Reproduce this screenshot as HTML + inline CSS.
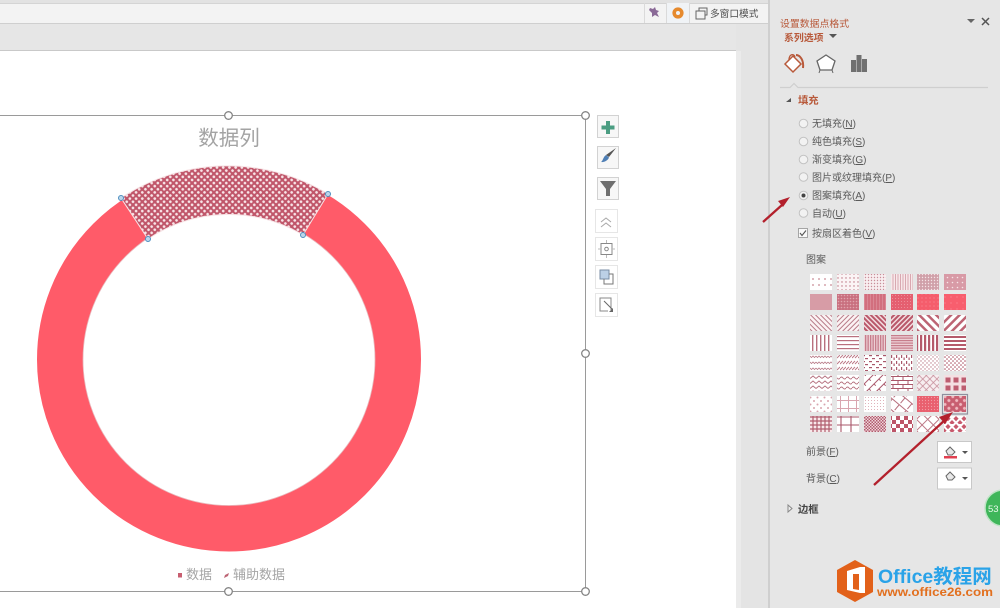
<!DOCTYPE html>
<html><head><meta charset="utf-8">
<style>
html,body{margin:0;padding:0;width:1000px;height:608px;overflow:hidden;background:#e6e6e6}
svg{display:block;filter:blur(.35px)}
text{font-family:"Liberation Sans","Noto Sans CJK SC",sans-serif}
.o{font-size:10px;fill:#5a5a5a}
</style></head><body>
<svg width="1000" height="608" viewBox="0 0 1000 608" xmlns="http://www.w3.org/2000/svg">
<defs>
<pattern id="sel" width="4.4" height="4.4" patternUnits="userSpaceOnUse" patternTransform="rotate(45 229 190)"><rect width="4.4" height="4.4" fill="#c0566a"/><circle cx="2.2" cy="2.2" r="1.35" fill="#f8e4e7"/></pattern>
<pattern id="p1" width="6" height="6" patternUnits="userSpaceOnUse"><rect width="6" height="6" fill="#fff"/><circle cx="3" cy="3" r=".9" fill="#c98893"/></pattern>
<pattern id="p2" width="4" height="4" patternUnits="userSpaceOnUse"><rect width="4" height="4" fill="#fbf4f5"/><circle cx="2" cy="2" r=".7" fill="#b86f7c"/></pattern>
<pattern id="p3" width="3" height="3" patternUnits="userSpaceOnUse"><rect width="3" height="3" fill="#f8eef0"/><circle cx="1.5" cy="1.5" r=".7" fill="#c88d98"/></pattern>
<pattern id="p4" width="2.5" height="3" patternUnits="userSpaceOnUse"><rect width="2.5" height="3" fill="#f7e8ea"/><rect width="1" height="3" fill="#d8a8b0"/></pattern>
<pattern id="p5" width="3" height="3" patternUnits="userSpaceOnUse"><rect width="3" height="3" fill="#d0a0a9"/><circle cx="1.5" cy="1.5" r=".7" fill="#f5e3e6"/></pattern>
<pattern id="p6" width="5" height="5" patternUnits="userSpaceOnUse"><rect width="5" height="5" fill="#d89aa6"/><circle cx="2.5" cy="2.5" r=".8" fill="#f7e3e6"/></pattern>
<pattern id="d1" width="4" height="4" patternUnits="userSpaceOnUse"><rect width="4" height="4" fill="#d79ca6"/></pattern>
<pattern id="d2" width="3" height="3" patternUnits="userSpaceOnUse"><rect width="3" height="3" fill="#c9707f"/><circle cx="1.5" cy="1.5" r=".8" fill="#e0a5ae"/></pattern>
<pattern id="d3" width="3" height="3" patternUnits="userSpaceOnUse"><rect width="3" height="3" fill="#d26f7e"/><rect width=".8" height="3" fill="#dc8d99"/></pattern>
<pattern id="d4" width="3" height="3" patternUnits="userSpaceOnUse"><rect width="3" height="3" fill="#e55f70"/><circle cx="1.5" cy="1.5" r=".5" fill="#ef9ba6"/></pattern>
<pattern id="d5" width="4" height="4" patternUnits="userSpaceOnUse"><rect width="4" height="4" fill="#f55d6c"/><circle cx="2" cy="2" r=".5" fill="#f9a2ab"/></pattern>
<pattern id="d6" width="6" height="6" patternUnits="userSpaceOnUse"><rect width="6" height="6" fill="#f85e6e"/><circle cx="3" cy="3" r=".5" fill="#fca5ae"/></pattern>
<pattern id="a1" width="3.5" height="3.5" patternUnits="userSpaceOnUse" patternTransform="rotate(-45)"><rect width="3.5" height="3.5" fill="#fbf2f3"/><rect width="1" height="3.5" fill="#b87c88"/></pattern>
<pattern id="a2" width="3.5" height="3.5" patternUnits="userSpaceOnUse" patternTransform="rotate(45)"><rect width="3.5" height="3.5" fill="#fbf2f3"/><rect width="1" height="3.5" fill="#b87c88"/></pattern>
<pattern id="a3" width="3.5" height="3.5" patternUnits="userSpaceOnUse" patternTransform="rotate(-45)"><rect width="3.5" height="3.5" fill="#f3dde0"/><rect width="2" height="3.5" fill="#b9586a"/></pattern>
<pattern id="a4" width="3.5" height="3.5" patternUnits="userSpaceOnUse" patternTransform="rotate(45)"><rect width="3.5" height="3.5" fill="#f3dde0"/><rect width="2" height="3.5" fill="#b9586a"/></pattern>
<pattern id="a5" width="6" height="6" patternUnits="userSpaceOnUse" patternTransform="rotate(-45)"><rect width="6" height="6" fill="#fff"/><rect width="2.5" height="6" fill="#bd6474"/></pattern>
<pattern id="a6" width="6" height="6" patternUnits="userSpaceOnUse" patternTransform="rotate(45)"><rect width="6" height="6" fill="#fff"/><rect width="2.5" height="6" fill="#bd6474"/></pattern>
<pattern id="v1" width="4" height="4" patternUnits="userSpaceOnUse"><rect width="4" height="4" fill="#fff"/><rect width="1.4" height="4" fill="#b9707e"/></pattern>
<pattern id="h1" width="4" height="4" patternUnits="userSpaceOnUse"><rect width="4" height="4" fill="#fff"/><rect width="4" height="1.2" fill="#b9707e"/></pattern>
<pattern id="v2" width="2.5" height="4" patternUnits="userSpaceOnUse"><rect width="2.5" height="4" fill="#eccfd4"/><rect width="1.3" height="4" fill="#c77d8b"/></pattern>
<pattern id="h2" width="4" height="2.5" patternUnits="userSpaceOnUse"><rect width="4" height="2.5" fill="#eccfd4"/><rect width="4" height="1.2" fill="#c77d8b"/></pattern>
<pattern id="v3" width="4" height="4" patternUnits="userSpaceOnUse"><rect width="4" height="4" fill="#fff"/><rect width="2.2" height="4" fill="#b55a6b"/></pattern>
<pattern id="h3" width="4" height="4" patternUnits="userSpaceOnUse"><rect width="4" height="4" fill="#fff"/><rect width="4" height="2" fill="#b55a6b"/></pattern>
<pattern id="w1" width="6" height="6" patternUnits="userSpaceOnUse"><rect width="6" height="6" fill="#fff"/><path d="M0 2l1.5 1.500L3 2l1.500 1.500L6 2" fill="none" stroke="#b97a87" stroke-width=".8"/></pattern>
<pattern id="w2" width="6" height="6" patternUnits="userSpaceOnUse"><rect width="6" height="6" fill="#fff"/><path d="M0 4L3 1M3 4L6 1" stroke="#bd7a87" stroke-width="1"/></pattern>
<pattern id="w3" width="7" height="6" patternUnits="userSpaceOnUse"><rect width="7" height="6" fill="#fff"/><rect x="1" y="1" width="3" height="1.200" fill="#a9576a"/><rect x="4" y="4" width="3" height="1.200" fill="#a9576a"/></pattern>
<pattern id="w4" width="5" height="6" patternUnits="userSpaceOnUse"><rect width="5" height="6" fill="#fff"/><rect x="1" y="1" width="1.200" height="3" fill="#a9576a"/><rect x="3.500" y="3.500" width="1.200" height="2.500" fill="#a9576a"/></pattern>
<pattern id="w5" width="4" height="4" patternUnits="userSpaceOnUse"><rect width="4" height="4" fill="#fff"/><circle cx="1" cy="1" r=".7" fill="#bb7d89"/><circle cx="3" cy="3" r=".7" fill="#bb7d89"/></pattern>
<pattern id="w6" width="4" height="4" patternUnits="userSpaceOnUse"><rect width="4" height="4" fill="#fff"/><circle cx="1" cy="1" r=".8" fill="#ac5062"/><circle cx="3" cy="3" r=".8" fill="#ac5062"/></pattern>
<pattern id="z1" width="6" height="5" patternUnits="userSpaceOnUse"><rect width="6" height="5" fill="#fff"/><path d="M0 3.500L3 1l3 2.500" fill="none" stroke="#b5707e" stroke-width=".9"/></pattern>
<pattern id="z2" width="6" height="5" patternUnits="userSpaceOnUse"><rect width="6" height="5" fill="#fff"/><path d="M0 3Q1.500 1 3 3T6 3" fill="none" stroke="#b5707e" stroke-width=".9"/></pattern>
<pattern id="z3" width="7" height="7" patternUnits="userSpaceOnUse" patternTransform="rotate(-45)"><rect width="7" height="7" fill="#fff"/><rect width="7" height="1" fill="#a9576a"/><rect x="3" width="1" height="3" fill="#a9576a"/></pattern>
<pattern id="z4" width="10" height="8" patternUnits="userSpaceOnUse"><rect width="10" height="8" fill="#fff"/><path d="M0 .5H10M0 4.500H10M3 .5V4.500M8 4.500V8" stroke="#a9576a" fill="none"/></pattern>
<pattern id="z5" width="5" height="5" patternUnits="userSpaceOnUse" patternTransform="rotate(45)"><rect width="5" height="5" fill="#f7eef0"/><path d="M0 .5H5M.5 0V5" stroke="#c78f9b" stroke-width=".8"/></pattern>
<pattern id="z6" width="8" height="8" patternUnits="userSpaceOnUse"><rect width="8" height="8" fill="#f4dfe2"/><rect x="1.500" y="1.500" width="5" height="5" fill="#bd5d70"/></pattern>
<pattern id="s1" width="7" height="7" patternUnits="userSpaceOnUse"><rect width="7" height="7" fill="#fff"/><circle cx="2" cy="2" r="1" fill="#d9a5af"/><circle cx="5.500" cy="5.500" r="1" fill="#d9a5af"/></pattern>
<pattern id="s2" width="8" height="8" patternUnits="userSpaceOnUse"><rect width="8" height="8" fill="#fff"/><path d="M.5 0V8M0 .5H8" stroke="#d9a5af"/></pattern>
<pattern id="s3" width="3" height="3" patternUnits="userSpaceOnUse"><rect width="3" height="3" fill="#fff"/><circle cx="1.500" cy="1.500" r=".5" fill="#d69aa5"/></pattern>
<pattern id="s4" width="9" height="9" patternUnits="userSpaceOnUse" patternTransform="rotate(40)"><rect width="9" height="9" fill="#fff"/><path d="M0 2H9M4 2V9" stroke="#b66d7c"/></pattern>
<pattern id="s5" width="3" height="3" patternUnits="userSpaceOnUse"><rect width="3" height="3" fill="#e9606f"/><circle cx="1.500" cy="1.500" r=".6" fill="#f29da6"/></pattern>
<pattern id="s6" width="5.500" height="5.500" patternUnits="userSpaceOnUse" patternTransform="rotate(45)"><rect width="5.500" height="5.500" fill="#c85e70"/><circle cx="2.700" cy="2.700" r="1.500" fill="#f0b9c0"/></pattern>
<pattern id="g1" width="4" height="4" patternUnits="userSpaceOnUse"><rect width="4" height="4" fill="#f8e8ea"/><path d="M1 0V4M0 1H4" stroke="#b05c6d" stroke-width="1.200"/></pattern>
<pattern id="g2" width="10" height="8" patternUnits="userSpaceOnUse"><rect width="10" height="8" fill="#fff"/><path d="M1 0V8M0 1H10" stroke="#a9576a" stroke-width="1.100"/></pattern>
<pattern id="g3" width="3" height="3" patternUnits="userSpaceOnUse"><rect width="3" height="3" fill="#f1d5da"/><rect width="1.500" height="1.500" fill="#b05c6d"/><rect x="1.500" y="1.500" width="1.500" height="1.500" fill="#b05c6d"/></pattern>
<pattern id="g4" width="8" height="8" patternUnits="userSpaceOnUse"><rect width="8" height="8" fill="#fff"/><rect width="4" height="4" fill="#bd5568"/><rect x="4" y="4" width="4" height="4" fill="#bd5568"/></pattern>
<pattern id="g5" width="8" height="8" patternUnits="userSpaceOnUse" patternTransform="rotate(45)"><rect width="8" height="8" fill="#fff"/><path d="M.5 0V8M0 .5H8" stroke="#bd7785"/></pattern>
<pattern id="g6" width="8" height="8" patternUnits="userSpaceOnUse"><rect width="8" height="8" fill="#fff"/><path d="M4 0l2.600 2.600L4 5.200 1.400 2.600z" fill="#c8596c"/><path d="M0 4l2.600 2.600L0 9.200zM8 4L5.400 6.600 8 9.200z" fill="#c8596c"/></pattern>
</defs>

<!-- chrome -->
<rect width="1000" height="608" fill="#e6e6e6"/>
<rect x="0" y="0" width="770" height="3" fill="#e2e2e2"/>
<rect x="0" y="3" width="768" height="20" fill="#f3f3f3"/>
<rect x="0" y="3" width="768" height="1" fill="#d4d4d4"/>
<rect x="0" y="23" width="768" height="1" fill="#cfcfcf"/>
<rect x="0" y="50" width="736" height="1.500" fill="#c9c9c9"/>
<rect x="0" y="51" width="736" height="557" fill="#fff"/>
<rect x="736" y="24" width="33" height="584" fill="#e4e4e4"/>
<rect x="736" y="51" width="5" height="557" fill="#ebebeb"/>
<rect x="768" y="0" width="2" height="608" fill="#cfcfcf"/>
<rect x="644" y="3" width="1" height="20" fill="#dadada"/>
<rect x="667" y="3" width="22" height="20" fill="#f0f3f6"/>
<rect x="666" y="3" width="1" height="20" fill="#dadada"/>
<rect x="689" y="3" width="1" height="20" fill="#dadada"/>
<path d="M650 8l3 1 2-2 1 3 3 1-2 2 2 4-4-2-3 2 0-4-3-3z" fill="#8a6a97"/>
<circle cx="678" cy="13" r="3.800" fill="none" stroke="#e68a2e" stroke-width="3.600"/>
<rect x="696" y="11" width="9" height="8" fill="none" stroke="#666"/>
<path d="M699 11V8h8v7h-2" fill="none" stroke="#666"/>
<text x="710" y="17" font-size="9.700" fill="#4c4c4c">多窗口模式</text>

<!-- chart frame -->
<path d="M-1 115.500H585.500V591.500H-1" fill="none" stroke="#9a9a9a"/>
<text x="229" y="145" font-size="20.500" fill="#a3a3a3" text-anchor="middle">数据列</text>

<!-- ring -->
<circle cx="229" cy="359.500" r="169" fill="none" stroke="#ff5b69" stroke-width="46"/>
<circle cx="229" cy="359.500" r="146" fill="none" stroke="#e8b8bc" stroke-width=".8"/>
<path d="M121 198A193 193 0 0 1 328 194L303 235A145 145 0 0 0 148 239Z" fill="url(#sel)" stroke="#f7e4e6" stroke-width="1"/>
<g fill="#bcd6ea" stroke="#4e8fc0" stroke-width="1"><circle cx="121" cy="198" r="2.500"/><circle cx="328" cy="194" r="2.500"/><circle cx="148" cy="239" r="2.500"/><circle cx="303" cy="235" r="2.500"/></g>

<rect x="178" y="573" width="4" height="4.500" fill="#c85e70"/>
<text x="186" y="579" font-size="13" fill="#a5a5a5">数据</text>
<path d="M224 578l1-3 4-2-1 3z" fill="#bd6474"/>
<text x="233" y="579" font-size="13" fill="#a5a5a5">辅助数据</text>

<g fill="#fff" stroke="#858585" stroke-width="1.300">
<circle cx="228.500" cy="115.500" r="3.800"/><circle cx="585.500" cy="115.500" r="3.800"/><circle cx="585.500" cy="353.500" r="3.800"/><circle cx="228.500" cy="591.500" r="3.800"/><circle cx="585.500" cy="591.500" r="3.800"/>
</g>

<!-- side buttons -->
<g fill="#f7f7f7" stroke="#d2d2d2">
<rect x="597.500" y="115.500" width="21" height="22"/><rect x="597.500" y="146.500" width="21" height="22"/><rect x="597.500" y="177.500" width="21" height="22"/>
</g>
<g fill="#fff" stroke="#e6e6e6">
<rect x="595.500" y="209.500" width="22" height="23"/><rect x="595.500" y="237.500" width="22" height="23"/><rect x="595.500" y="265.500" width="22" height="23"/><rect x="595.500" y="293.500" width="22" height="23"/>
</g>
<path d="M606 121h4v4.500h4.500v4H610v4.500h-4v-4.500h-4.500v-4H606z" fill="#4b9d82"/>
<path d="M616 148l-7 9-3-2z" fill="#555"/><path d="M606 155l3 2.500c-1 3-5 5-8 4.500 2-1 2-5 5-7z" fill="#4f7fb5"/>
<path d="M600 181h16l-6 8v7h-4v-7z" fill="#6f6f6f"/>
<path d="M601 222l5-4 5 4M601 227l5-4 5 4" fill="none" stroke="#a8a8a8"/>
<rect x="601" y="243.500" width="11" height="11" fill="none" stroke="#888"/><circle cx="606.500" cy="249" r="1.800" fill="none" stroke="#888"/><path d="M606.500 240v3M606.500 255v3M598 249h3M612 249h3" stroke="#bbb"/>
<rect x="600" y="270" width="9" height="9" fill="#bcd0e6" stroke="#7a8ea5"/><path d="M609 274h4v10h-9v-5" fill="none" stroke="#777"/>
<path d="M611 310v-12h-11v13h8" fill="none" stroke="#888"/><path d="M604 301l8 8" stroke="#666"/><path d="M609 312l4-4v4z" fill="#666"/>

<!-- panel -->
<text x="780" y="27" font-size="9.900" fill="#b8593a">设置数据点格式</text>
<text x="784" y="41" font-size="9.900" font-weight="bold" fill="#b8593a">系列选项</text>
<path d="M829 34h8l-4 4z" fill="#555"/>
<path d="M967 19h8l-4 4z" fill="#666"/>
<path d="M982 18l7 7M989 18l-7 7" stroke="#555" stroke-width="1.500"/>
<!-- tabs -->
<path d="M785 64l8-8 8 8-8 8z" fill="#fff" stroke="#b8593a" stroke-width="1.500"/>
<path d="M789 60c0-6 5-7 6-3" fill="none" stroke="#b8593a" stroke-width="1.300"/>
<path d="M796 55c4 0 8 5 7 13" fill="none" stroke="#b8593a" stroke-width="2"/>
<path d="M826 55l9 6-3 9h-12l-3-9z" fill="#fff" stroke="#666" stroke-width="1.300"/>
<path d="M820 70l-1 3M832 70l1 3" stroke="#666"/>
<path d="M851 60h5v12h-5zM856.500 55h5v17h-5zM862 59h5v13h-5z" fill="#707070"/>
<path d="M780 87.500H790l4-4 4 4H988" fill="none" stroke="#cfcfcf" stroke-width="1.200"/>
<path d="M786 102l5-4v4z" fill="#555"/>
<text x="798" y="104" font-size="10.300" font-weight="bold" fill="#b8593a">填充</text>

<g fill="#f2f2f2" stroke="#c2c2c2">
<circle cx="803.500" cy="123.500" r="4.300"/><circle cx="803.500" cy="141.500" r="4.300"/><circle cx="803.500" cy="159.500" r="4.300"/><circle cx="803.500" cy="177" r="4.300"/><circle cx="803.500" cy="195.500" r="4.300"/><circle cx="803.500" cy="213" r="4.300"/>
</g>
<circle cx="803.500" cy="195.500" r="2" fill="#444"/>
<text class="o" x="812" y="127">无填充(<tspan text-decoration="underline">N</tspan>)</text>
<text class="o" x="812" y="145">纯色填充(<tspan text-decoration="underline">S</tspan>)</text>
<text class="o" x="812" y="163">渐变填充(<tspan text-decoration="underline">G</tspan>)</text>
<text class="o" x="812" y="181">图片或纹理填充(<tspan text-decoration="underline">P</tspan>)</text>
<text class="o" x="812" y="199">图案填充(<tspan text-decoration="underline">A</tspan>)</text>
<text class="o" x="812" y="217">自动(<tspan text-decoration="underline">U</tspan>)</text>
<rect x="798.500" y="228.500" width="9" height="9" fill="#f8f8f8" stroke="#a5a5a5"/>
<path d="M800 233l2 2.500 4-5" fill="none" stroke="#555" stroke-width="1.100"/>
<text class="o" x="812" y="237">按扇区着色(<tspan text-decoration="underline">V</tspan>)</text>
<text class="o" x="806" y="263">图案</text>

<!-- pattern grid -->
<g>
<rect x="810" y="274" width="22" height="16" fill="url(#p1)"/><rect x="837" y="274" width="22" height="16" fill="url(#p2)"/><rect x="864" y="274" width="22" height="16" fill="url(#p3)"/><rect x="891" y="274" width="22" height="16" fill="url(#p4)"/><rect x="917" y="274" width="22" height="16" fill="url(#p5)"/><rect x="944" y="274" width="22" height="16" fill="url(#p6)"/>
<rect x="810" y="294" width="22" height="16" fill="url(#d1)"/><rect x="837" y="294" width="22" height="16" fill="url(#d2)"/><rect x="864" y="294" width="22" height="16" fill="url(#d3)"/><rect x="891" y="294" width="22" height="16" fill="url(#d4)"/><rect x="917" y="294" width="22" height="16" fill="url(#d5)"/><rect x="944" y="294" width="22" height="16" fill="url(#d6)"/>
<rect x="810" y="315" width="22" height="16" fill="url(#a1)"/><rect x="837" y="315" width="22" height="16" fill="url(#a2)"/><rect x="864" y="315" width="22" height="16" fill="url(#a3)"/><rect x="891" y="315" width="22" height="16" fill="url(#a4)"/><rect x="917" y="315" width="22" height="16" fill="url(#a5)"/><rect x="944" y="315" width="22" height="16" fill="url(#a6)"/>
<rect x="810" y="335" width="22" height="16" fill="url(#v1)"/><rect x="837" y="335" width="22" height="16" fill="url(#h1)"/><rect x="864" y="335" width="22" height="16" fill="url(#v2)"/><rect x="891" y="335" width="22" height="16" fill="url(#h2)"/><rect x="917" y="335" width="22" height="16" fill="url(#v3)"/><rect x="944" y="335" width="22" height="16" fill="url(#h3)"/>
<rect x="810" y="355" width="22" height="16" fill="url(#w1)"/><rect x="837" y="355" width="22" height="16" fill="url(#w2)"/><rect x="864" y="355" width="22" height="16" fill="url(#w3)"/><rect x="891" y="355" width="22" height="16" fill="url(#w4)"/><rect x="917" y="355" width="22" height="16" fill="url(#w5)"/><rect x="944" y="355" width="22" height="16" fill="url(#w6)"/>
<rect x="810" y="375" width="22" height="16" fill="url(#z1)"/><rect x="837" y="375" width="22" height="16" fill="url(#z2)"/><rect x="864" y="375" width="22" height="16" fill="url(#z3)"/><rect x="891" y="375" width="22" height="16" fill="url(#z4)"/><rect x="917" y="375" width="22" height="16" fill="url(#z5)"/><rect x="944" y="375" width="22" height="16" fill="url(#z6)"/>
<rect x="810" y="396" width="22" height="16" fill="url(#s1)"/><rect x="837" y="396" width="22" height="16" fill="url(#s2)"/><rect x="864" y="396" width="22" height="16" fill="url(#s3)"/><rect x="891" y="396" width="22" height="16" fill="url(#s4)"/><rect x="917" y="396" width="22" height="16" fill="url(#s5)"/><rect x="944" y="396" width="22" height="16" fill="url(#s6)"/>
<rect x="810" y="416" width="22" height="16" fill="url(#g1)"/><rect x="837" y="416" width="22" height="16" fill="url(#g2)"/><rect x="864" y="416" width="22" height="16" fill="url(#g3)"/><rect x="891" y="416" width="22" height="16" fill="url(#g4)"/><rect x="917" y="416" width="22" height="16" fill="url(#g5)"/><rect x="944" y="416" width="22" height="16" fill="url(#g6)"/>
<rect x="942.500" y="394.500" width="25" height="19.500" fill="none" stroke="#8f8f9d" stroke-width="1.200"/>
</g>

<text class="o" x="806" y="455">前景(<tspan text-decoration="underline">F</tspan>)</text>
<text class="o" x="806" y="482">背景(<tspan text-decoration="underline">C</tspan>)</text>
<rect x="937.500" y="441.500" width="34" height="21" fill="#fff" stroke="#c8c8c8"/>
<rect x="937.500" y="468" width="34" height="21" fill="#fff" stroke="#c8c8c8"/>
<path d="M946 451l4-4 5 5-3 3h-4z" fill="#e8e8e8" stroke="#666"/><rect x="944" y="456" width="13" height="2.500" fill="#e04050"/>
<path d="M962 451h6l-3 3z" fill="#555"/>
<path d="M946 476l4-4 5 5-3 3h-4z" fill="#e8e8e8" stroke="#666"/>
<path d="M962 477h6l-3 3z" fill="#555"/>
<path d="M788 505v7l4-3.500z" fill="#eee" stroke="#888"/>
<text x="798" y="513" font-size="10.300" font-weight="bold" fill="#444">边框</text>

<!-- green badge -->
<circle cx="1003" cy="508" r="18" fill="#3fb65a" stroke="#bfe3c6" stroke-width="1.500"/>
<text x="988" y="512" font-size="9.500" fill="#e8f7ea">53</text>

<!-- arrows -->
<g stroke="#b3202c" stroke-width="2.300" fill="#b3202c">
<path d="M763 222L782 205" fill="none"/><path d="M790 197l-12 4 5 6z" stroke="none"/>
<path d="M874 485L945 420" fill="none"/><path d="M953 412l-14 5 6 7z" stroke="none"/>
</g>

<!-- watermark -->
<path d="M855 560l18 10v22l-18 10-18-10v-22z" fill="#e2611a"/>
<path d="M847 571l13-4h5v26h-5l-13-3z" fill="#fff"/><path d="M853 574h6v16l-6-1z" fill="#e2611a"/>
<text x="878" y="583" font-size="19.500" font-weight="bold" fill="#2aa3e8">Office教程网</text>
<text x="877" y="596" font-size="11.500" font-weight="bold" fill="#e2701f" textLength="116" lengthAdjust="spacingAndGlyphs">www.office26.com</text>
</svg>
</body></html>
